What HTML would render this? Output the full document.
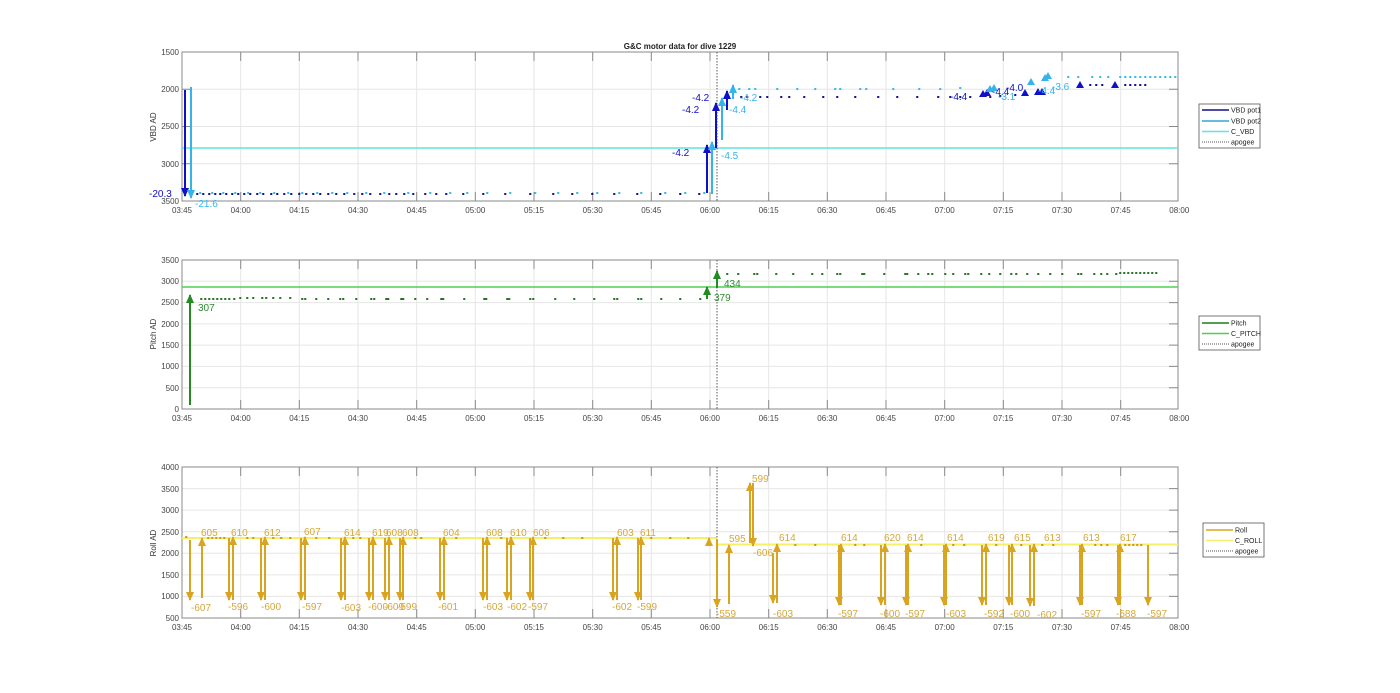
<!DOCTYPE html>
<html><head><meta charset="utf-8"><style>
html,body{margin:0;padding:0;background:#fff;}
svg{display:block;font-family:"Liberation Sans",sans-serif;}
.tk{font-size:8px;fill:#444;}
.gr{stroke:#e6e6e6;stroke-width:1;fill:none;}
.ax{stroke:#8a8a8a;stroke-width:1;fill:none;}
.lb{font-size:10px;}
.lg{font-size:7px;fill:#222;}
</style></head><body>
<svg width="1400" height="693" viewBox="0 0 1400 693" xmlns="http://www.w3.org/2000/svg">
<defs>
<marker id="mDB" markerUnits="userSpaceOnUse" markerWidth="10" markerHeight="10" refX="8" refY="5" orient="auto" viewBox="0 0 10 10"><path d="M0 1L9 5L0 9Z" fill="#1010c8"/></marker>
<marker id="mLB" markerUnits="userSpaceOnUse" markerWidth="10" markerHeight="10" refX="8" refY="5" orient="auto" viewBox="0 0 10 10"><path d="M0 1L9 5L0 9Z" fill="#35b4ea"/></marker>
<marker id="mG" markerUnits="userSpaceOnUse" markerWidth="10" markerHeight="10" refX="8" refY="5" orient="auto" viewBox="0 0 10 10"><path d="M0 1L9 5L0 9Z" fill="#228b22"/></marker>
<marker id="mY" markerUnits="userSpaceOnUse" markerWidth="10" markerHeight="10" refX="8" refY="5" orient="auto" viewBox="0 0 10 10"><path d="M0 1L9 5L0 9Z" fill="#d9a521"/></marker>
</defs>

<text x="680" y="49" text-anchor="middle" style="font-size:8px;font-weight:bold" fill="#222">G&amp;C motor data for dive 1229</text>

<!-- ============ PLOT 1 ============ -->
<rect x="182" y="52" width="996" height="149" fill="#fff"/>
<path class="gr" d="M240.7 52V201M299.3 52V201M358 52V201M416.7 52V201M475.3 52V201M534 52V201M592.7 52V201M651.3 52V201M710 52V201M768.7 52V201M827.3 52V201M886 52V201M944.7 52V201M1003.3 52V201M1062 52V201M1120.7 52V201M182 89.3H1178M182 126.5H1178M182 163.8H1178"/>
<path class="ax" d="M182 52H1178V201H182Z"/>
<path stroke="#8a8a8a" d="M240.7 201v-9M299.3 201v-9M358 201v-9M416.7 201v-9M475.3 201v-9M534 201v-9M592.7 201v-9M651.3 201v-9M710 201v-9M768.7 201v-9M827.3 201v-9M886 201v-9M944.7 201v-9M1003.3 201v-9M1062 201v-9M1120.7 201v-9M240.7 52v9M299.3 52v9M358 52v9M416.7 52v9M475.3 52v9M534 52v9M592.7 52v9M651.3 52v9M710 52v9M768.7 52v9M827.3 52v9M886 52v9M944.7 52v9M1003.3 52v9M1062 52v9M1120.7 52v9M1178 89.3h-9M1178 126.5h-9M1178 163.8h-9M182 89.3h9M182 126.5h9M182 163.8h9"/>
<g class="tk" text-anchor="end"><text x="179" y="55">1500</text><text x="179" y="92">2000</text><text x="179" y="129">2500</text><text x="179" y="167">3000</text><text x="179" y="204">3500</text></g>
<g class="tk" text-anchor="middle"><text x="182" y="213">03:45</text><text x="240.7" y="213">04:00</text><text x="299.3" y="213">04:15</text><text x="358" y="213">04:30</text><text x="416.7" y="213">04:45</text><text x="475.3" y="213">05:00</text><text x="534" y="213">05:15</text><text x="592.7" y="213">05:30</text><text x="651.3" y="213">05:45</text><text x="710" y="213">06:00</text><text x="768.7" y="213">06:15</text><text x="827.3" y="213">06:30</text><text x="886" y="213">06:45</text><text x="944.7" y="213">07:00</text><text x="1003.3" y="213">07:15</text><text x="1062" y="213">07:30</text><text x="1120.7" y="213">07:45</text><text x="1179.3" y="213">08:00</text></g>
<text transform="translate(156,127) rotate(-90)" text-anchor="middle" style="font-size:8px" fill="#333">VBD AD</text>
<line x1="182" y1="148" x2="1178" y2="148" stroke="#5fe3e3" stroke-width="1.5"/>
<line x1="717" y1="52" x2="717" y2="201" stroke="#555" stroke-dasharray="1.5,1.5"/>
<path stroke="#0a0a8a" stroke-width="2" stroke-linecap="round" d="M197 194h.5M203 194h.5M209 194h.5M215 194h.5M220 194h.5M226 194h.5M232 194h.5M238 194h.5M244 194h.5M250 194h.5M257 194h.5M263 194h.5M271 194h.5M277 194h.5M284 194h.5M291 194h.5M299 194h.5M306 194h.5M313 194h.5M320 194h.5M328 194h.5M336 194h.5M344 194h.5M354 194h.5M362 194h.5M370 194h.5M380 194h.5M389 194h.5M396 194h.5M404 194h.5M413 194h.5M425 194h.5M436 194h.5M446 194h.5M463 194h.5M483 194h.5M505 194h.5M530 194h.5M553 194h.5M572 194h.5M592 194h.5M614 194h.5M637 194h.5M660 194h.5M680 194h.5M699 194h.5M741 97h.5M747 97h.5M760 97h.5M767 97h.5M781 97h.5M789 97h.5M804 97h.5M823 97h.5M837 97h.5M855 97h.5M878 97h.5M897 97h.5M917 97h.5M938 97h.5M950 97h.5M960 97h.5M970 97h.5M990 97h.5M1000 96h.5M1015 95h.5M1090 85h.5M1096 85h.5M1102 85h.5M1125 85h.5M1130 85h.5M1135 85h.5M1140 85h.5M1145 85h.5"/>
<path stroke="#2fb8ea" stroke-width="2" stroke-linecap="round" d="M200 193h.5M212 193h.5M223 193h.5M235 193h.5M248 193h.5M260 193h.5M274 193h.5M288 193h.5M302 193h.5M317 193h.5M332 193h.5M347 193h.5M366 193h.5M384 193h.5M408 193h.5M430 193h.5M450 193h.5M467 193h.5M487 193h.5M510 193h.5M535 193h.5M558 193h.5M577 193h.5M597 193h.5M619 193h.5M641 193h.5M665 193h.5M685 193h.5M704 193h.5M739 89h.5M749 89h.5M755 89h.5M777 89h.5M797 89h.5M815 89h.5M835 89h.5M840 89h.5M860 89h.5M866 89h.5M893 89h.5M919 89h.5M940 89h.5M960 88h.5M1068 77h.5M1078 77h.5M1092 77h.5M1100 77h.5M1108 77h.5M1120 77h.5M1125 77h.5M1130 77h.5M1135 77h.5M1140 77h.5M1145 77h.5M1150 77h.5M1155 77h.5M1160 77h.5M1165 77h.5M1170 77h.5M1175 77h.5"/>
<g stroke-width="2">
<line x1="185" y1="90" x2="185" y2="196" stroke="#1010c8" marker-end="url(#mDB)"/>
<line x1="191" y1="87" x2="191" y2="198" stroke="#35b4ea" marker-end="url(#mLB)"/>
<line x1="707" y1="193" x2="707" y2="145" stroke="#1010c8" marker-end="url(#mDB)"/>
<line x1="712" y1="194" x2="712" y2="142" stroke="#35b4ea" marker-end="url(#mLB)"/>
<line x1="716" y1="148" x2="716" y2="103" stroke="#1010c8" marker-end="url(#mDB)"/>
<line x1="722" y1="140" x2="722" y2="98" stroke="#35b4ea" marker-end="url(#mLB)"/>
<line x1="727" y1="110" x2="727" y2="91" stroke="#1010c8" marker-end="url(#mDB)"/>
<line x1="733" y1="99" x2="733" y2="85" stroke="#35b4ea" marker-end="url(#mLB)"/>
</g>
<g fill="#1010c8"><path d="M979 97l4-7 4 7Z"/><path d="M983 96l4-7 4 7Z"/><path d="M1021 96l4-7 4 7Z"/><path d="M1034 95l4-7 4 7Z"/><path d="M1038 95l4-7 4 7Z"/><path d="M1076 88l4-7 4 7Z"/><path d="M1111 88l4-7 4 7Z"/></g>
<g fill="#35b4ea"><path d="M986 92l4-7 4 7Z"/><path d="M990 91l4-7 4 7Z"/><path d="M1027 85l4-7 4 7Z"/><path d="M1041 81l4-7 4 7Z"/><path d="M1044 79l4-7 4 7Z"/></g>
<g class="lb" fill="#1010c8"><text x="149" y="197">-20.3</text><text x="672" y="156">-4.2</text><text x="682" y="113">-4.2</text><text x="692" y="101">-4.2</text><text x="950" y="100">-4.4</text><text x="992" y="95">-4.4</text><text x="1006" y="91">-4.0</text></g>
<g class="lb" fill="#35b4ea"><text x="195" y="207">-21.6</text><text x="721" y="159">-4.5</text><text x="729" y="113">-4.4</text><text x="740" y="101">-4.2</text><text x="998" y="100">-3.1</text><text x="1038" y="94">-4.4</text><text x="1052" y="90">-3.6</text></g>
<rect x="1199" y="104" width="61" height="44" fill="#fff" stroke="#555" stroke-width=".8"/>
<line x1="1202" y1="110" x2="1229" y2="110" stroke="#10108a" stroke-width="1.5"/><text class="lg" x="1231" y="112.5">VBD pot1</text>
<line x1="1202" y1="121" x2="1229" y2="121" stroke="#35a4e0" stroke-width="1.5"/><text class="lg" x="1231" y="123.5">VBD pot2</text>
<line x1="1202" y1="131.5" x2="1229" y2="131.5" stroke="#5fe3e3" stroke-width="1.5"/><text class="lg" x="1231" y="134">C_VBD</text>
<line x1="1202" y1="142" x2="1229" y2="142" stroke="#555" stroke-dasharray="1,1"/><text class="lg" x="1231" y="144.5">apogee</text>

<!-- ============ PLOT 2 ============ -->
<path class="gr" d="M240.7 260V409M299.3 260V409M358 260V409M416.7 260V409M475.3 260V409M534 260V409M592.7 260V409M651.3 260V409M710 260V409M768.7 260V409M827.3 260V409M886 260V409M944.7 260V409M1003.3 260V409M1062 260V409M1120.7 260V409M182 281.3H1178M182 302.6H1178M182 323.9H1178M182 345.1H1178M182 366.4H1178M182 387.7H1178"/>
<path class="ax" d="M182 260H1178V409H182Z"/>
<path stroke="#8a8a8a" d="M240.7 409v-9M299.3 409v-9M358 409v-9M416.7 409v-9M475.3 409v-9M534 409v-9M592.7 409v-9M651.3 409v-9M710 409v-9M768.7 409v-9M827.3 409v-9M886 409v-9M944.7 409v-9M1003.3 409v-9M1062 409v-9M1120.7 409v-9M240.7 260v9M299.3 260v9M358 260v9M416.7 260v9M475.3 260v9M534 260v9M592.7 260v9M651.3 260v9M710 260v9M768.7 260v9M827.3 260v9M886 260v9M944.7 260v9M1003.3 260v9M1062 260v9M1120.7 260v9M1178 281.3h-9M1178 302.6h-9M1178 323.9h-9M1178 345.1h-9M1178 366.4h-9M1178 387.7h-9"/>
<g class="tk" text-anchor="end"><text x="179" y="263">3500</text><text x="179" y="284">3000</text><text x="179" y="305">2500</text><text x="179" y="327">2000</text><text x="179" y="348">1500</text><text x="179" y="369">1000</text><text x="179" y="391">500</text><text x="179" y="412">0</text></g>
<g class="tk" text-anchor="middle"><text x="182" y="421">03:45</text><text x="240.7" y="421">04:00</text><text x="299.3" y="421">04:15</text><text x="358" y="421">04:30</text><text x="416.7" y="421">04:45</text><text x="475.3" y="421">05:00</text><text x="534" y="421">05:15</text><text x="592.7" y="421">05:30</text><text x="651.3" y="421">05:45</text><text x="710" y="421">06:00</text><text x="768.7" y="421">06:15</text><text x="827.3" y="421">06:30</text><text x="886" y="421">06:45</text><text x="944.7" y="421">07:00</text><text x="1003.3" y="421">07:15</text><text x="1062" y="421">07:30</text><text x="1120.7" y="421">07:45</text><text x="1179.3" y="421">08:00</text></g>
<text transform="translate(156,334) rotate(-90)" text-anchor="middle" style="font-size:8px" fill="#333">Pitch AD</text>
<line x1="182" y1="287" x2="1178" y2="287" stroke="#4fd04f" stroke-width="1.5"/>
<line x1="717" y1="260" x2="717" y2="409" stroke="#555" stroke-dasharray="1.5,1.5"/>
<path stroke="#1f6f1f" stroke-width="2" stroke-linecap="round" d="M201 299h.5M205 299h.5M209 299h.5M213 299h.5M217 299h.5M221 299h.5M225 299h.5M229 299h.5M234 299h.5M240 298h.5M247 298h.5M253 298h.5M262 298h.5M266 298h.5M273 298h.5M280 298h.5M290 298h.5M302 299h.5M305 299h.5M316 299h.5M328 299h.5M340 299h.5M343 299h.5M356 299h.5M371 299h.5M374 299h.5M386 299h.5M388 299h.5M401 299h.5M403 299h.5M415 299h.5M427 299h.5M441 299h.5M443 299h.5M464 299h.5M484 299h.5M486 299h.5M507 299h.5M509 299h.5M530 299h.5M533 299h.5M555 299h.5M574 299h.5M594 299h.5M614 299h.5M617 299h.5M638 299h.5M641 299h.5M661 299h.5M680 299h.5M700 299h.5M727 274h.5M738 274h.5M754 274h.5M757 274h.5M776 274h.5M793 274h.5M812 274h.5M822 274h.5M837 274h.5M840 274h.5M862 274h.5M864 274h.5M884 274h.5M905 274h.5M907 274h.5M918 274h.5M928 274h.5M932 274h.5M945 274h.5M953 274h.5M965 274h.5M968 274h.5M981 274h.5M989 274h.5M1000 274h.5M1011 274h.5M1016 274h.5M1027 274h.5M1038 274h.5M1050 274h.5M1062 274h.5M1078 274h.5M1081 274h.5M1094 274h.5M1101 274h.5M1107 274h.5M1116 274h.5M1120 273h.5M1124 273h.5M1128 273h.5M1132 273h.5M1136 273h.5M1140 273h.5M1144 273h.5M1148 273h.5M1152 273h.5M1156 273h.5"/>
<g stroke-width="2" stroke="#228b22">
<line x1="190" y1="405" x2="190" y2="295" marker-end="url(#mG)"/>
<line x1="707" y1="299" x2="707" y2="287" marker-end="url(#mG)"/>
<line x1="717" y1="288" x2="717" y2="271" marker-end="url(#mG)"/>
</g>
<g class="lb" fill="#2e8b2e"><text x="198" y="311">307</text><text x="714" y="301">379</text><text x="724" y="287">434</text></g>
<rect x="1199" y="316" width="61" height="34" fill="#fff" stroke="#555" stroke-width=".8"/>
<line x1="1202" y1="323" x2="1229" y2="323" stroke="#1f7a1f" stroke-width="1.5"/><text class="lg" x="1231" y="325.5">Pitch</text>
<line x1="1202" y1="333.5" x2="1229" y2="333.5" stroke="#4fd04f" stroke-width="1.5"/><text class="lg" x="1231" y="336">C_PITCH</text>
<line x1="1202" y1="344" x2="1229" y2="344" stroke="#555" stroke-dasharray="1,1"/><text class="lg" x="1231" y="346.5">apogee</text>

<!-- ============ PLOT 3 ============ -->
<path class="gr" d="M240.7 467V618M299.3 467V618M358 467V618M416.7 467V618M475.3 467V618M534 467V618M592.7 467V618M651.3 467V618M710 467V618M768.7 467V618M827.3 467V618M886 467V618M944.7 467V618M1003.3 467V618M1062 467V618M1120.7 467V618M182 488.6H1178M182 510.1H1178M182 531.7H1178M182 553.3H1178M182 574.9H1178M182 596.4H1178"/>
<path class="ax" d="M182 467H1178V618H182Z"/>
<path stroke="#8a8a8a" d="M240.7 618v-9M299.3 618v-9M358 618v-9M416.7 618v-9M475.3 618v-9M534 618v-9M592.7 618v-9M651.3 618v-9M710 618v-9M768.7 618v-9M827.3 618v-9M886 618v-9M944.7 618v-9M1003.3 618v-9M1062 618v-9M1120.7 618v-9M240.7 467v9M299.3 467v9M358 467v9M416.7 467v9M475.3 467v9M534 467v9M592.7 467v9M651.3 467v9M710 467v9M768.7 467v9M827.3 467v9M886 467v9M944.7 467v9M1003.3 467v9M1062 467v9M1120.7 467v9M1178 488.6h-9M1178 510.1h-9M1178 531.7h-9M1178 553.3h-9M1178 574.9h-9M1178 596.4h-9"/>
<g class="tk" text-anchor="end"><text x="179" y="470">4000</text><text x="179" y="492">3500</text><text x="179" y="513">3000</text><text x="179" y="535">2500</text><text x="179" y="556">2000</text><text x="179" y="578">1500</text><text x="179" y="599">1000</text><text x="179" y="621">500</text></g>
<g class="tk" text-anchor="middle"><text x="182" y="630">03:45</text><text x="240.7" y="630">04:00</text><text x="299.3" y="630">04:15</text><text x="358" y="630">04:30</text><text x="416.7" y="630">04:45</text><text x="475.3" y="630">05:00</text><text x="534" y="630">05:15</text><text x="592.7" y="630">05:30</text><text x="651.3" y="630">05:45</text><text x="710" y="630">06:00</text><text x="768.7" y="630">06:15</text><text x="827.3" y="630">06:30</text><text x="886" y="630">06:45</text><text x="944.7" y="630">07:00</text><text x="1003.3" y="630">07:15</text><text x="1062" y="630">07:30</text><text x="1120.7" y="630">07:45</text><text x="1179.3" y="630">08:00</text></g>
<text transform="translate(156,543) rotate(-90)" text-anchor="middle" style="font-size:8px" fill="#333">Roll AD</text>
<line x1="182" y1="538" x2="717" y2="538" stroke="#f6ef6a" stroke-width="2"/>
<line x1="717" y1="544.5" x2="1178" y2="544.5" stroke="#f6ef6a" stroke-width="2"/>
<line x1="717" y1="467" x2="717" y2="618" stroke="#555" stroke-dasharray="1.5,1.5"/>
<path stroke="#c8951a" stroke-width="2" stroke-linecap="round" d="M186 537h.5M208 538h.5M212 538h.5M216 538h.5M220 538h.5M224 538h.5M247 538h.5M253 538h.5M273 538h.5M281 538h.5M290 538h.5M316 538h.5M329 538h.5M353 538h.5M360 538h.5M415 538h.5M421 538h.5M456 538h.5M501 538h.5M545 538h.5M563 538h.5M582 538h.5M651 538h.5M670 538h.5M688 538h.5M795 545h.5M815 545h.5M855 545h.5M864 545h.5M921 545h.5M953 545h.5M964 545h.5M996 545h.5M1021 545h.5M1042 545h.5M1053 545h.5M1095 545h.5M1101 545h.5M1107 545h.5M1125 545h.5M1129 545h.5M1133 545h.5M1137 545h.5M1141 545h.5"/>
<g stroke-width="2" stroke="#d9a521">
<line x1="190" y1="540" x2="190" y2="600" marker-end="url(#mY)"/>
<line x1="202" y1="598" x2="202" y2="538" marker-end="url(#mY)"/>
<line x1="229" y1="538" x2="229" y2="600" marker-end="url(#mY)"/><line x1="233" y1="600" x2="233" y2="537" marker-end="url(#mY)"/>
<line x1="261" y1="538" x2="261" y2="600" marker-end="url(#mY)"/><line x1="265" y1="600" x2="265" y2="537" marker-end="url(#mY)"/>
<line x1="301" y1="538" x2="301" y2="600" marker-end="url(#mY)"/><line x1="305" y1="600" x2="305" y2="537" marker-end="url(#mY)"/>
<line x1="341" y1="538" x2="341" y2="600" marker-end="url(#mY)"/><line x1="345" y1="600" x2="345" y2="537" marker-end="url(#mY)"/>
<line x1="369" y1="538" x2="369" y2="600" marker-end="url(#mY)"/><line x1="373" y1="600" x2="373" y2="537" marker-end="url(#mY)"/>
<line x1="385" y1="538" x2="385" y2="600" marker-end="url(#mY)"/><line x1="389" y1="600" x2="389" y2="537" marker-end="url(#mY)"/>
<line x1="400" y1="538" x2="400" y2="600" marker-end="url(#mY)"/><line x1="403" y1="600" x2="403" y2="537" marker-end="url(#mY)"/>
<line x1="440" y1="538" x2="440" y2="600" marker-end="url(#mY)"/><line x1="444" y1="600" x2="444" y2="537" marker-end="url(#mY)"/>
<line x1="483" y1="538" x2="483" y2="600" marker-end="url(#mY)"/><line x1="487" y1="600" x2="487" y2="537" marker-end="url(#mY)"/>
<line x1="507" y1="538" x2="507" y2="600" marker-end="url(#mY)"/><line x1="511" y1="600" x2="511" y2="537" marker-end="url(#mY)"/>
<line x1="530" y1="538" x2="530" y2="600" marker-end="url(#mY)"/><line x1="533" y1="600" x2="533" y2="537" marker-end="url(#mY)"/>
<line x1="613" y1="538" x2="613" y2="600" marker-end="url(#mY)"/><line x1="617" y1="600" x2="617" y2="537" marker-end="url(#mY)"/>
<line x1="638" y1="538" x2="638" y2="600" marker-end="url(#mY)"/><line x1="641" y1="600" x2="641" y2="537" marker-end="url(#mY)"/>
<line x1="709" y1="545" x2="709" y2="538" marker-end="url(#mY)"/>
<line x1="717" y1="540" x2="717" y2="607" marker-end="url(#mY)"/>
<line x1="729" y1="604" x2="729" y2="545" marker-end="url(#mY)"/>
<line x1="750" y1="543" x2="750" y2="483" marker-end="url(#mY)"/><line x1="753" y1="483" x2="753" y2="546" marker-end="url(#mY)"/>
<line x1="773" y1="553" x2="773" y2="603" marker-end="url(#mY)"/><line x1="777" y1="603" x2="777" y2="544" marker-end="url(#mY)"/>
<line x1="839" y1="545" x2="839" y2="605" marker-end="url(#mY)"/><line x1="841" y1="605" x2="841" y2="544" marker-end="url(#mY)"/>
<line x1="881" y1="545" x2="881" y2="605" marker-end="url(#mY)"/><line x1="885" y1="605" x2="885" y2="544" marker-end="url(#mY)"/>
<line x1="906" y1="545" x2="906" y2="605" marker-end="url(#mY)"/><line x1="908" y1="605" x2="908" y2="544" marker-end="url(#mY)"/>
<line x1="944" y1="545" x2="944" y2="605" marker-end="url(#mY)"/><line x1="946" y1="605" x2="946" y2="544" marker-end="url(#mY)"/>
<line x1="982" y1="545" x2="982" y2="605" marker-end="url(#mY)"/><line x1="986" y1="605" x2="986" y2="544" marker-end="url(#mY)"/>
<line x1="1009" y1="545" x2="1009" y2="605" marker-end="url(#mY)"/><line x1="1012" y1="605" x2="1012" y2="544" marker-end="url(#mY)"/>
<line x1="1030" y1="545" x2="1030" y2="606" marker-end="url(#mY)"/><line x1="1034" y1="606" x2="1034" y2="544" marker-end="url(#mY)"/>
<line x1="1080" y1="545" x2="1080" y2="605" marker-end="url(#mY)"/><line x1="1082" y1="605" x2="1082" y2="544" marker-end="url(#mY)"/>
<line x1="1118" y1="545" x2="1118" y2="605" marker-end="url(#mY)"/><line x1="1120" y1="605" x2="1120" y2="544" marker-end="url(#mY)"/>
<line x1="1148" y1="545" x2="1148" y2="605" marker-end="url(#mY)"/>
</g>
<g class="lb" fill="#d4a83a">
<text x="201" y="536">605</text><text x="231" y="536">610</text><text x="264" y="536">612</text><text x="304" y="535">607</text><text x="344" y="536">614</text><text x="372" y="536">619</text><text x="386" y="536">608</text><text x="402" y="536">608</text><text x="443" y="536">604</text><text x="486" y="536">608</text><text x="510" y="536">610</text><text x="533" y="536">606</text><text x="617" y="536">603</text><text x="640" y="536">611</text>
<text x="729" y="542">595</text><text x="752" y="482">599</text><text x="779" y="541">614</text><text x="841" y="541">614</text><text x="884" y="541">620</text><text x="907" y="541">614</text><text x="947" y="541">614</text><text x="988" y="541">619</text><text x="1014" y="541">615</text><text x="1044" y="541">613</text><text x="1083" y="541">613</text><text x="1120" y="541">617</text>
<text x="191" y="611">-607</text><text x="228" y="610">-596</text><text x="261" y="610">-600</text><text x="302" y="610">-597</text><text x="341" y="611">-603</text><text x="368" y="610">-600</text><text x="384" y="610">-609</text><text x="397" y="610">-599</text><text x="438" y="610">-601</text><text x="483" y="610">-603</text><text x="507" y="610">-602</text><text x="528" y="610">-597</text><text x="612" y="610">-602</text><text x="637" y="610">-599</text>
<text x="716" y="617">-559</text><text x="753" y="556">-606</text><text x="773" y="617">-603</text><text x="838" y="617">-597</text><text x="880" y="617">-600</text><text x="905" y="617">-597</text><text x="946" y="617">-603</text><text x="984" y="617">-592</text><text x="1010" y="617">-600</text><text x="1037" y="618">-602</text><text x="1081" y="617">-597</text><text x="1116" y="617">-588</text><text x="1147" y="617">-597</text>
</g>
<rect x="1203" y="523" width="61" height="34" fill="#fff" stroke="#555" stroke-width=".8"/>
<line x1="1206" y1="530" x2="1233" y2="530" stroke="#d9a521" stroke-width="1.5"/><text class="lg" x="1235" y="532.5">Roll</text>
<line x1="1206" y1="540.5" x2="1233" y2="540.5" stroke="#f6ef6a" stroke-width="1.5"/><text class="lg" x="1235" y="543">C_ROLL</text>
<line x1="1206" y1="551" x2="1233" y2="551" stroke="#555" stroke-dasharray="1,1"/><text class="lg" x="1235" y="553.5">apogee</text>
</svg>
</body></html>
